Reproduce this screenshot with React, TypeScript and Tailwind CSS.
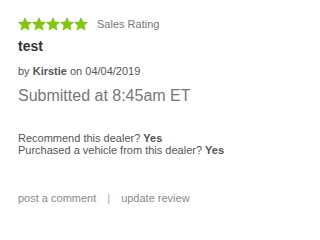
import React from "react";

function Star() {
  return (
    <svg viewBox="0 0 24 24" className="w-[14px] h-[14px]">
      <path
        d="M12 1.2l3.3 7.2 7.9.8-6 5.3 1.8 7.9L12 18.3l-7 4.1 1.8-7.9-6-5.3 7.9-.8z"
        fill="#80c80e"
        stroke="#6aa80a"
        strokeWidth="0.8"
        strokeLinejoin="round"
      />
    </svg>
  );
}

export default function App() {
  return (
    <div className="w-[305px] h-[217px] bg-white pl-[18px] pt-[17px] font-['Liberation_Sans',Arial,sans-serif]">
      {/* rating */}
      <div className="flex items-center gap-[9px] h-[14px]">
        <div className="flex">
          {[0, 1, 2, 3, 4].map((i) => (
            <Star key={i} />
          ))}
        </div>
        <span className="text-[11px] text-[#777] leading-none">Sales Rating</span>
      </div>

      <h2 className="mt-[6px] text-[14px] font-bold text-[#333] leading-[18px]">test</h2>

      <p className="mt-[9px] text-[11px] text-[#555] leading-[14px]">
        by <span className="font-bold">Kirstie</span> on 04/04/2019
      </p>

      <p className="mt-[8px] text-[16px] text-[#777] leading-[20px]">Submitted at 8:45am ET</p>

      <div className="mt-[26px] text-[11px] text-[#555] leading-[12px]">
        <p>
          Recommend this dealer? <span className="font-bold">Yes</span>
        </p>
        <p>
          Purchased a vehicle from this dealer? <span className="font-bold">Yes</span>
        </p>
      </div>

      <div className="mt-[35px] flex items-center text-[11px] text-[#858a91] leading-[14px]">
        <a href="#">post a comment</a>
        <span className="mx-[11px] text-[#aaa]">|</span>
        <a href="#">update review</a>
      </div>
    </div>
  );
}
